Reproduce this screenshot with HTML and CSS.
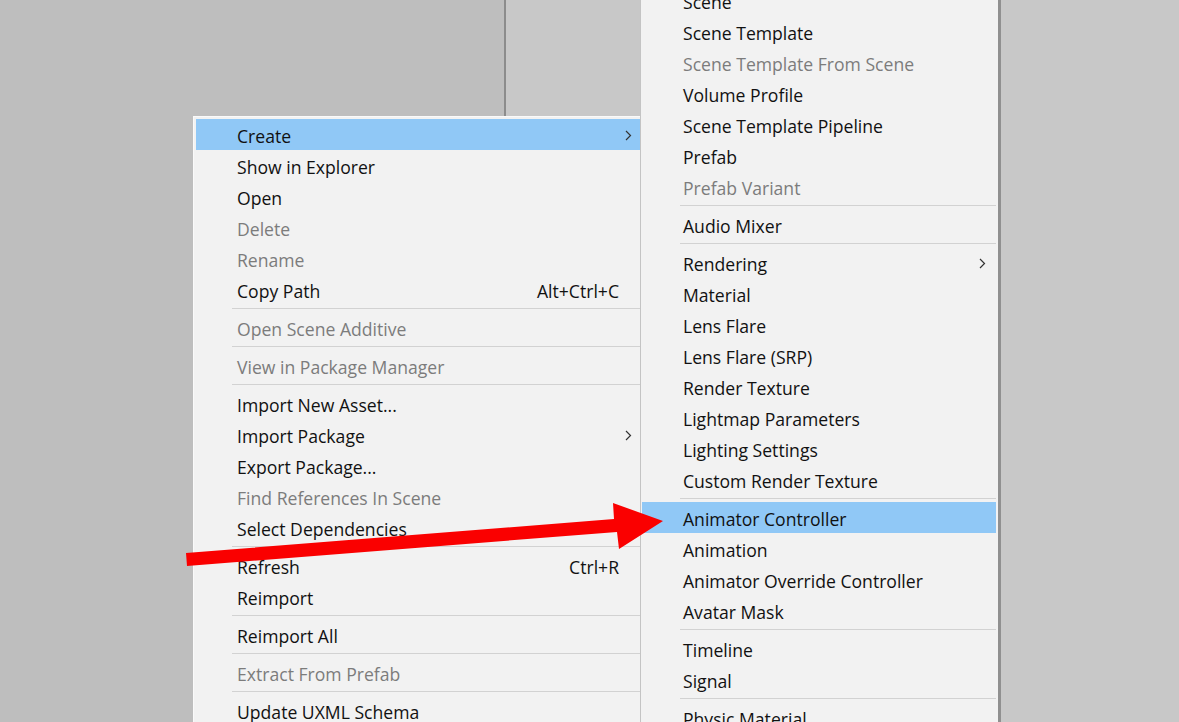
FILE: index.html
```html
<!DOCTYPE html>
<html lang="en">
<head>
    <meta charset="UTF-8">
    <meta name="viewport" content="width=device-width, initial-scale=1.0">
    <title>Project context menu</title>
    <link rel="stylesheet" href="styles.css">
</head>
<body>
    <div class="desk">
        <div class="pane pane-left"></div>
        <div class="divider"></div>
        <div class="pane pane-right"></div>
    </div>

    <div class="menu menu-main">
        <div class="item active"><span class="label">Create</span><svg class="chevron" viewBox="0 0 7 11"><polyline points="1,1 5.5,5.5 1,10"/></svg></div>
        <div class="item"><span class="label">Show in Explorer</span></div>
        <div class="item"><span class="label">Open</span></div>
        <div class="item disabled"><span class="label">Delete</span></div>
        <div class="item disabled"><span class="label">Rename</span></div>
        <div class="item"><span class="label">Copy Path</span><span class="shortcut">Alt+Ctrl+C</span></div>
        <div class="sep"></div>
        <div class="item disabled"><span class="label">Open Scene Additive</span></div>
        <div class="sep"></div>
        <div class="item disabled"><span class="label">View in Package Manager</span></div>
        <div class="sep"></div>
        <div class="item"><span class="label">Import New Asset...</span></div>
        <div class="item"><span class="label">Import Package</span><svg class="chevron" viewBox="0 0 7 11"><polyline points="1,1 5.5,5.5 1,10"/></svg></div>
        <div class="item"><span class="label">Export Package...</span></div>
        <div class="item disabled"><span class="label">Find References In Scene</span></div>
        <div class="item"><span class="label">Select Dependencies</span></div>
        <div class="sep"></div>
        <div class="item"><span class="label">Refresh</span><span class="shortcut">Ctrl+R</span></div>
        <div class="item"><span class="label">Reimport</span></div>
        <div class="sep"></div>
        <div class="item"><span class="label">Reimport All</span></div>
        <div class="sep"></div>
        <div class="item disabled"><span class="label">Extract From Prefab</span></div>
        <div class="sep"></div>
        <div class="item"><span class="label">Update UXML Schema</span></div>
    </div>

    <div class="menu menu-sub">
        <div class="item"><span class="label">Scene</span></div>
        <div class="item"><span class="label">Scene Template</span></div>
        <div class="item disabled"><span class="label">Scene Template From Scene</span></div>
        <div class="item"><span class="label">Volume Profile</span></div>
        <div class="item"><span class="label">Scene Template Pipeline</span></div>
        <div class="item"><span class="label">Prefab</span></div>
        <div class="item disabled"><span class="label">Prefab Variant</span></div>
        <div class="sep"></div>
        <div class="item"><span class="label">Audio Mixer</span></div>
        <div class="sep"></div>
        <div class="item"><span class="label">Rendering</span><svg class="chevron" viewBox="0 0 7 11"><polyline points="1,1 5.5,5.5 1,10"/></svg></div>
        <div class="item"><span class="label">Material</span></div>
        <div class="item"><span class="label">Lens Flare</span></div>
        <div class="item"><span class="label">Lens Flare (SRP)</span></div>
        <div class="item"><span class="label">Render Texture</span></div>
        <div class="item"><span class="label">Lightmap Parameters</span></div>
        <div class="item"><span class="label">Lighting Settings</span></div>
        <div class="item"><span class="label">Custom Render Texture</span></div>
        <div class="sep"></div>
        <div class="item active"><span class="label">Animator Controller</span></div>
        <div class="item"><span class="label">Animation</span></div>
        <div class="item"><span class="label">Animator Override Controller</span></div>
        <div class="item"><span class="label">Avatar Mask</span></div>
        <div class="sep"></div>
        <div class="item"><span class="label">Timeline</span></div>
        <div class="item"><span class="label">Signal</span></div>
        <div class="sep"></div>
        <div class="item"><span class="label">Physic Material</span></div>
    </div>

    <svg class="arrow" viewBox="0 0 1179 722">
        <polygon points="186,553 614,519 613,503 663,521 619,549 617,532 187,566"/>
    </svg>
</body>
</html>
```

FILE: styles.css
```css
html, body {
    margin: 0;
    height: 100%;
}
body {
    position: relative;
    overflow: hidden;
    font-family: "Open Sans", "Noto Sans", sans-serif;
    font-size: 17.6px;
    color: #111;
}
.desk {
    display: flex;
    height: 100%;
}
.pane-left {
    width: 504px;
    background-color: #bebebe;
}
.divider {
    width: 2px;
    background-color: #8c8c8c;
}
.pane-right {
    flex: 1;
    background-color: #c8c8c8;
}
.menu {
    position: absolute;
    background-color: #f2f2f2;
}
.menu-main {
    left: 193px;
    top: 116px;
    width: 444px;
    height: 620px;
    border-top: 1px solid #fafafa;
    border-left: 1px solid #fafafa;
    padding: 2px 0 0 2px;
}
.menu-sub {
    left: 640px;
    top: -16px;
    width: 354px;
    height: 760px;
    border-left: 1px solid #c4c4c4;
    border-right: 3px solid #909090;
    padding: 1px 2px 0 1px;
    z-index: 1;
}
.item {
    display: flex;
    align-items: center;
    height: 31px;
    padding: 2px 8px 0 41px;
    box-sizing: border-box;
    white-space: nowrap;
}
.item.active {
    background-color: #90c8f6;
}
.item.disabled {
    color: #7c7c7c;
}
.label {
    flex: 1;
}
.shortcut {
    margin-right: 13px;
}
.chevron {
    width: 7px;
    height: 11px;
    fill: none;
    stroke: #333;
    stroke-width: 1.2;
}
.menu-sub .item {
    padding-right: 10px;
}
.sep {
    height: 7px;
    margin-left: 36px;
    display: flex;
    align-items: center;
}
.sep::after {
    content: "";
    flex: 1;
    height: 1px;
    background-color: #d2d2d2;
}
.menu-sub .sep {
    margin-left: 38px;
}
.arrow {
    position: absolute;
    left: 0;
    top: 0;
    width: 1179px;
    height: 722px;
    z-index: 2;
    fill: #fa0000;
}
```
